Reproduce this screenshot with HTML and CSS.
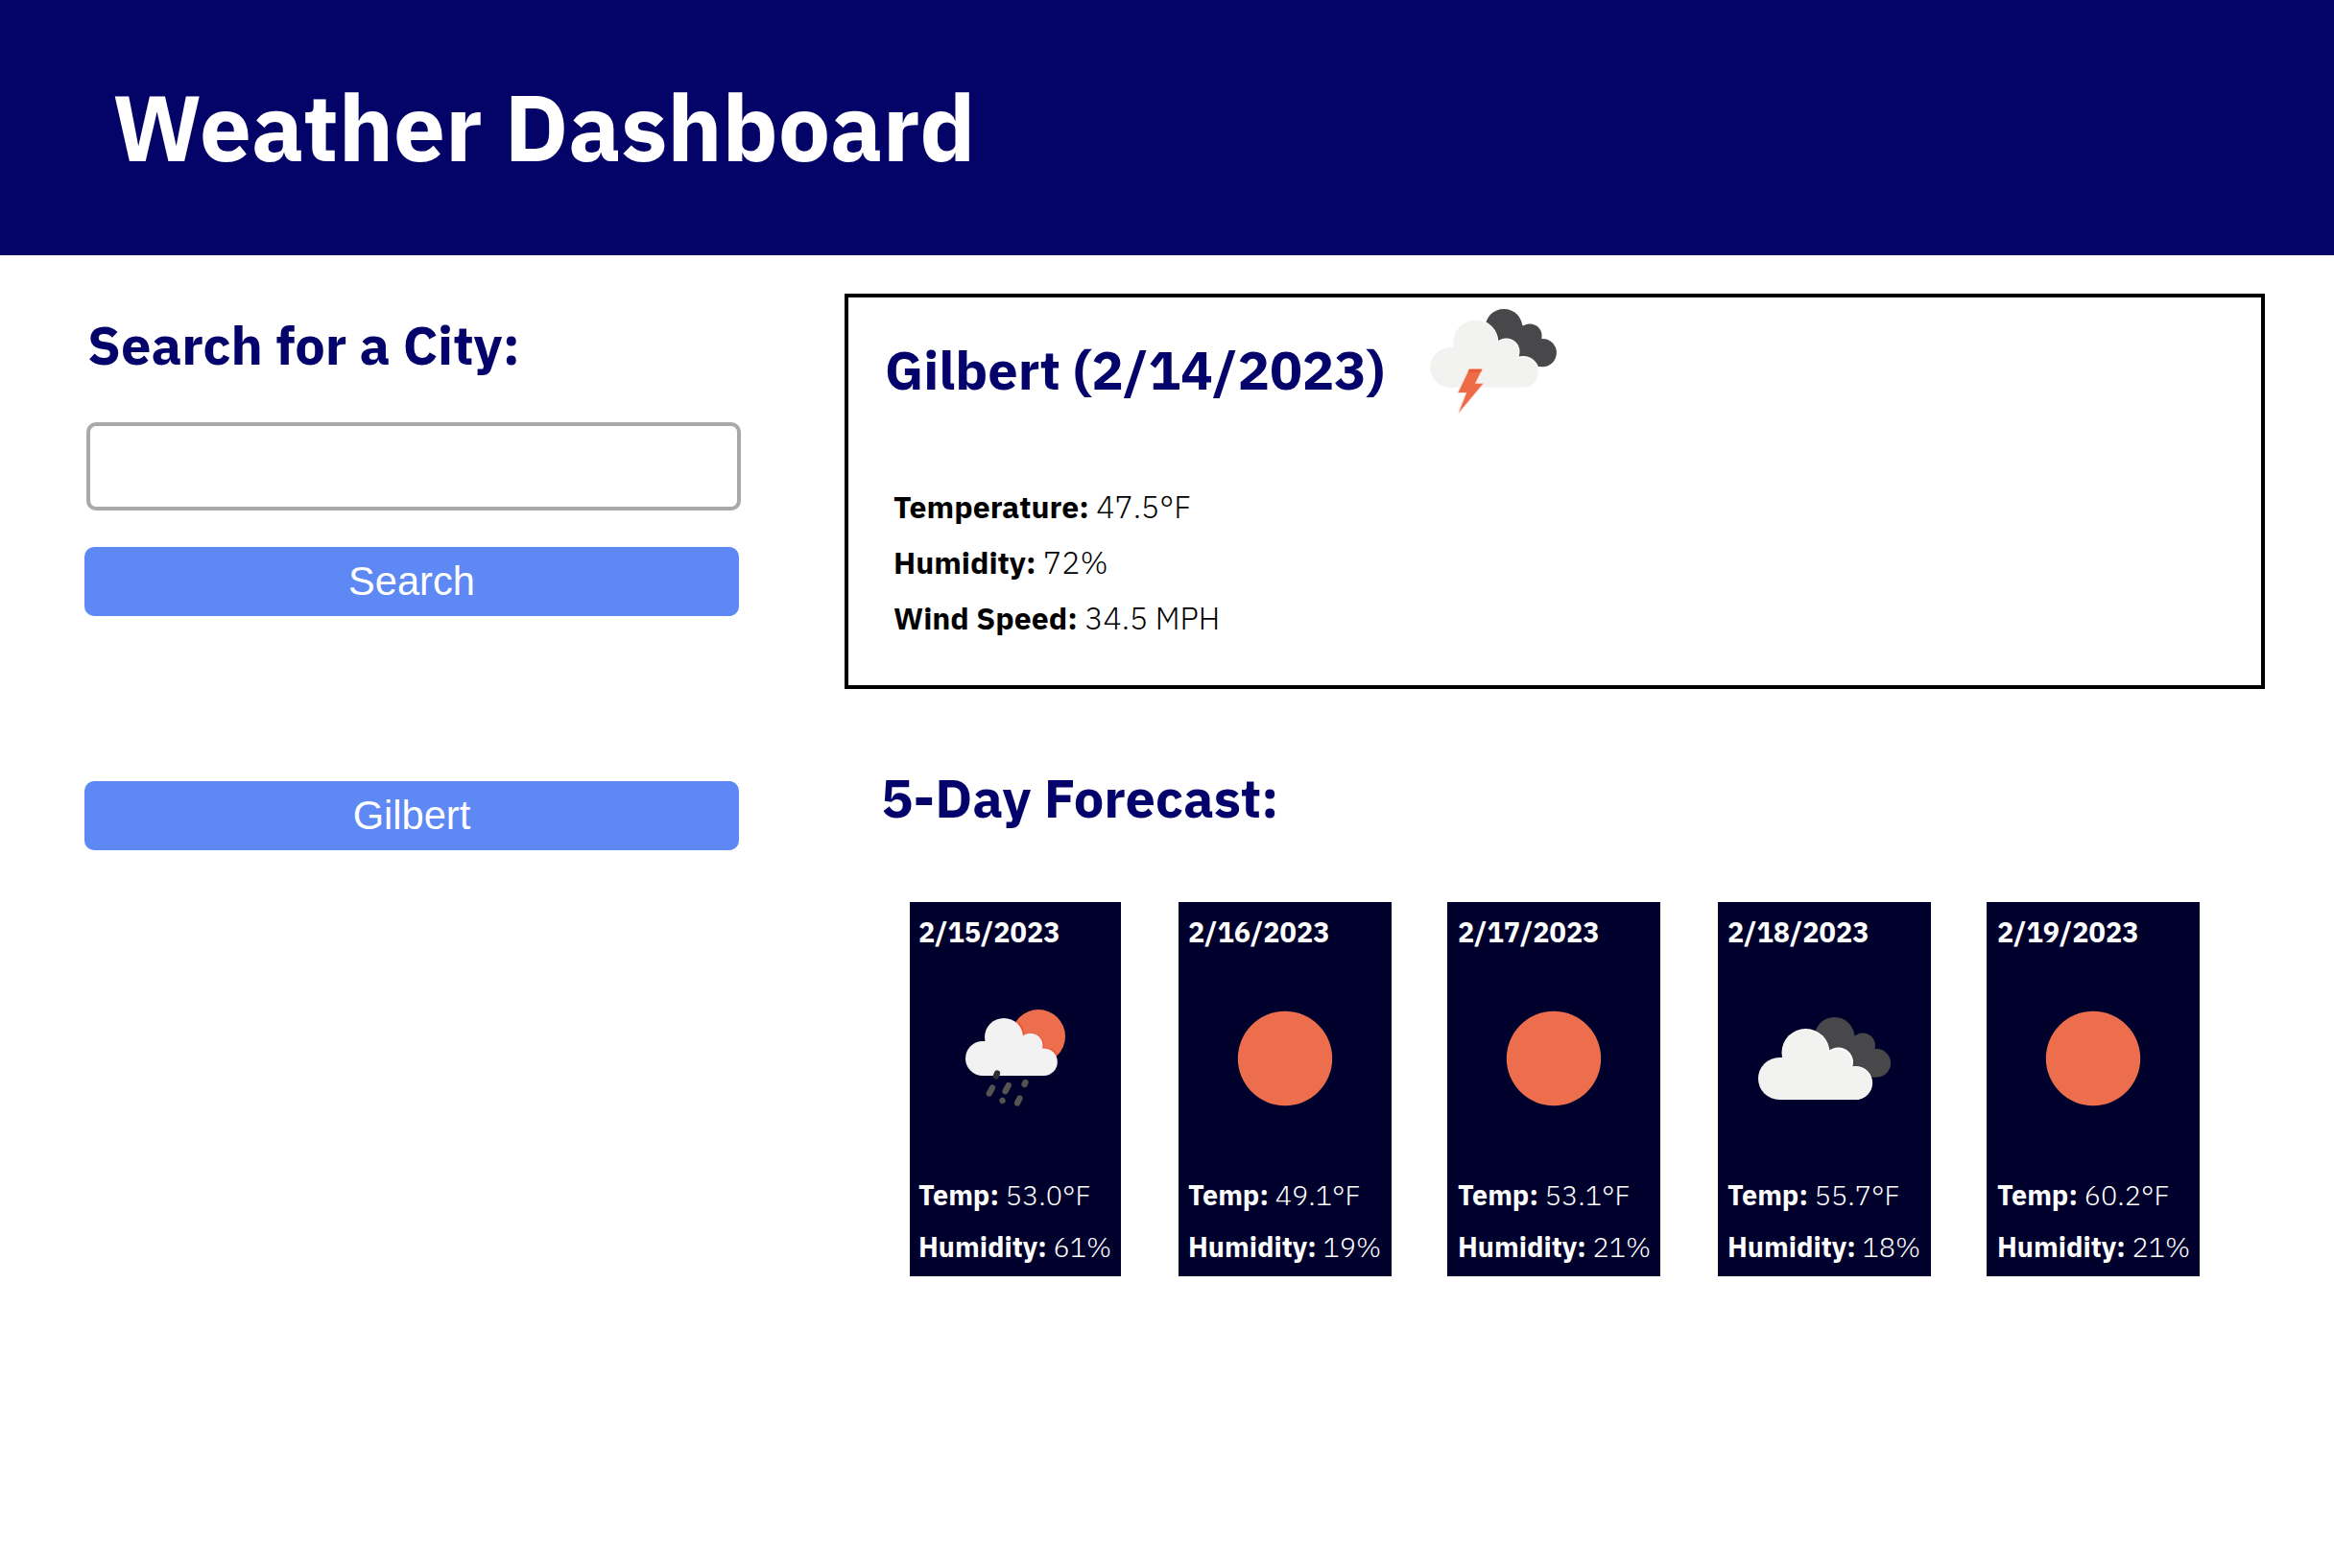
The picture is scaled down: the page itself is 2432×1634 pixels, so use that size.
FILE: index.html
```html
<!DOCTYPE html>
<html lang="en">
<head>
<meta charset="utf-8">
<title>Weather Dashboard</title>
<link rel="stylesheet" href="styles.css">
</head>
<body>
<header class="page-header"><h1>Weather Dashboard</h1></header>
<main class="layout">
  <section class="sidebar">
    <h2 class="search-title">Search for a City:</h2>
    <input class="search-input" type="text" aria-label="City">
    <button class="btn" type="button">Search</button>
    <div class="history"><button class="btn" type="button">Gilbert</button></div>
  </section>
  <section class="content">
    <article class="current">
      <div class="current-head">
        <h2>Gilbert (2/14/2023)</h2>
        <svg class="current-icon" viewBox="20 16 150 124">
          <g fill="#48484a"><circle cx="107" cy="41.3" r="19.4"/><circle cx="134" cy="50" r="12.6"/><circle cx="147.3" cy="67.6" r="14.6"/><path d="M100 50L125 38L147 56L147 82H120Z"/></g>
          <g fill="#2c2c2e" opacity=".6"><path d="M88.5 36A24.500 24.500 0 0 1 102 53.500L100 58L92 50Z"/></g>
          <g fill="#fff"><circle cx="77.5" cy="57" r="24"/><circle cx="109.5" cy="66.5" r="14"/><circle cx="127" cy="88" r="17"/></g>
          <g fill="#f2f2f1"><circle cx="51" cy="83" r="20.9"/><circle cx="77.5" cy="57" r="23.2"/><circle cx="109.5" cy="66.5" r="13"/><circle cx="127" cy="88" r="15.8"/><path d="M51 62H118V76H127V103.8H51Z"/></g>
          <path d="M71 84.7H84.3L77 99.7H85.3L60 130L68.3 109H59.5Z" fill="#ee6b48" stroke="#fbe6df" stroke-width="2" paint-order="stroke"/>
          <path d="M71 84.7H84.3L83 87.4H69.7Z" fill="#ec5a33"/>
        </svg>
      </div>
      <div class="details">
        <p><b>Temperature:</b> 47.5°F</p>
        <p><b>Humidity:</b> 72%</p>
        <p><b>Wind Speed:</b> 34.5 MPH</p>
      </div>
    </article>
    <h2 class="forecast-title">5-Day Forecast:</h2>
    <div class="forecast">
      <article class="day">
        <h3>2/15/2023</h3>
        <svg class="day-icon" viewBox="0 0 200 200"><g transform="translate(22 27)">
          <circle cx="102" cy="50" r="28" fill="#ec6e4c"/>
          <path d="M80 34.5A20 20 0 0 1 86.500 49.500A13 13 0 0 1 106.800 62.500A14.800 14.800 0 0 1 121.500 69.500" fill="none" stroke="#f05238" stroke-width="1.8"/>
          <g fill="#f2f2f2"><circle cx="44" cy="73" r="18"/><circle cx="66" cy="51" r="20"/><circle cx="93.800" cy="59.500" r="12.700"/><circle cx="107.500" cy="76.700" r="14.300"/><path d="M44 55H104V64H107.500V91H44Z"/></g>
          <g stroke="#565450" stroke-width="6.200" stroke-linecap="round"><path stroke="#2f2f2f" d="M59 88.500L57.800 91.500"/><path d="M54 103.500L50.800 109.500M70.800 101L67.500 107.300M88.500 98L87.500 100M64.500 116.800L64.600 117M82.500 114.500L80 119.500"/></g>
        </g></svg>
        <p><b>Temp:</b> 53.0°F</p>
        <p><b>Humidity:</b> 61%</p>
      </article>
      <article class="day">
        <h3>2/16/2023</h3>
        <svg class="day-icon" viewBox="0 0 200 200"><circle cx="100" cy="100" r="49.200" fill="#ec6e4c"/></svg>
        <p><b>Temp:</b> 49.1°F</p>
        <p><b>Humidity:</b> 19%</p>
      </article>
      <article class="day">
        <h3>2/17/2023</h3>
        <svg class="day-icon" viewBox="0 0 200 200"><circle cx="100" cy="100" r="49.200" fill="#ec6e4c"/></svg>
        <p><b>Temp:</b> 53.1°F</p>
        <p><b>Humidity:</b> 21%</p>
      </article>
      <article class="day">
        <h3>2/18/2023</h3>
        <svg class="day-icon" viewBox="0 0 200 200"><g transform="translate(9 37)">
          <g fill="#48484a"><circle cx="101.500" cy="41" r="21"/><circle cx="131" cy="49.500" r="13"/><circle cx="145.400" cy="67.800" r="14.700"/><path d="M95 50L121 38L145 57V82.500H118Z"/></g>
          <g fill="#fff"><circle cx="71.500" cy="57" r="25"/><circle cx="105.500" cy="67" r="15.500"/><circle cx="123.500" cy="88.500" r="17.600"/></g>
          <g fill="#f2f2f1"><circle cx="44" cy="84" r="22"/><circle cx="71.200" cy="57.300" r="24"/><circle cx="105" cy="67.500" r="14.200"/><circle cx="123" cy="89" r="17"/><path d="M44 62H114V74H123V106H44Z"/></g>
        </g></svg>
        <p><b>Temp:</b> 55.7°F</p>
        <p><b>Humidity:</b> 18%</p>
      </article>
      <article class="day">
        <h3>2/19/2023</h3>
        <svg class="day-icon" viewBox="0 0 200 200"><circle cx="100" cy="100" r="49.200" fill="#ec6e4c"/></svg>
        <p><b>Temp:</b> 60.2°F</p>
        <p><b>Humidity:</b> 21%</p>
      </article>
    </div>
  </section>
</main>
</body>
</html>
```
FILE: styles.css
```css
* { box-sizing: border-box; }
body { margin: 0; background: #fff; color: #000; font: 300 32px "IBM Plex Sans", "Noto Sans", sans-serif; }
h1, h2, h3, p { margin: 0; }
b { font-weight: 700; }
h2 { color: #03036b; font-size: 56px; font-weight: 700; line-height: 76px; white-space: nowrap; }

.page-header { height: 266px; padding: 68px 117px 0; background: #030368; }
.page-header h1 { color: #fff; font-size: 96px; font-weight: 700; line-height: 128px; }

.layout { display: flex; align-items: flex-start; gap: 110px; padding-left: 88px; }

.sidebar { display: flex; flex-direction: column; width: 682px; padding-top: 55px; }
.search-title { padding-left: 3px; }
.search-input { width: 682px; height: 92px; margin: 43px 0 0 2px; padding: 0 20px; border: 4px solid #a9a9a9; border-radius: 10px; background: #fff; font-size: 40px; }
.btn { width: 682px; height: 72px; margin-top: 38px; padding: 0; border: 0; border-radius: 10px; background: #5e88f4; color: #fff; font: 41.6px "Liberation Sans", Arial, sans-serif; }
.history { margin-top: 134px; }

.content { width: 1480px; padding-top: 40px; }
.current { height: 412px; padding: 6px 38px 0; border: 4px solid #000; }
.current-head { display: flex; height: 124px; }
.current-head h2 { width: 558px; padding-top: 31px; }
.current-icon { width: 150px; height: 124px; }
.details { margin-top: 59px; padding-left: 9px; }
.details p { line-height: 58px; }

.forecast-title { margin-top: 75px; padding-left: 38px; }
.forecast { display: flex; gap: 58px; margin: 71px 0 0 68px; }
.day { display: flex; flex-direction: column; flex: none; width: 222px; height: 390px; padding: 4px 0 0 10px; background: #00002c; color: #fff; font-size: 28.8px; white-space: nowrap; }
.day:first-child { width: 220px; padding-left: 9px; }
.day:nth-child(even) { margin-left: 2px; }
.day:nth-child(3), .day:nth-child(5) { padding-left: 11px; }
.day h3 { font-size: inherit; font-weight: 700; line-height: 54px; }
.day p { line-height: 54px; }
.day-icon { flex: none; width: 200px; height: 200px; margin: 5px 0 15px 1px; }
.day:nth-child(3) .day-icon, .day:nth-child(5) .day-icon { margin-left: 0; }
```
